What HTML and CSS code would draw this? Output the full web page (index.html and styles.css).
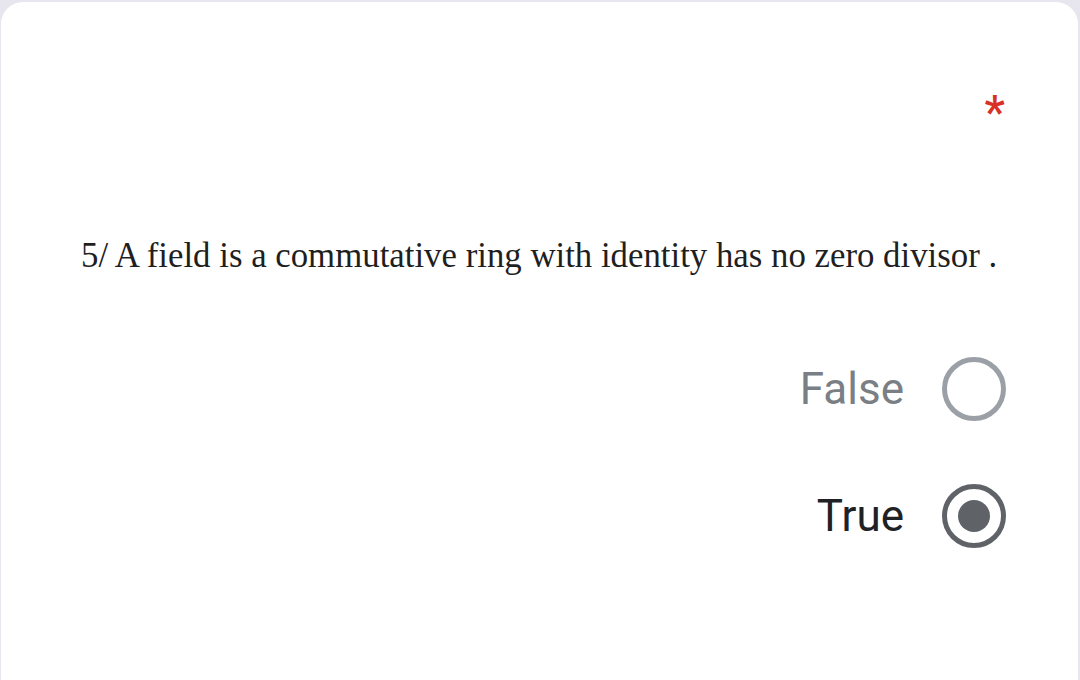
FILE: index.html
```html
<!DOCTYPE html>
<html lang="en">
<head>
  <meta charset="UTF-8" />
  <title>Question 5</title>
  <link rel="stylesheet" href="styles.css">
</head>
<body>
  <div class="card">
    <div class="card-head">
      <span class="required">*</span>
    </div>

    <p class="question">5/ A field is a commutative ring with identity has no zero divisor .</p>

    <div class="options">
      <label class="option">
        <span class="option-label">False</span>
        <span class="radio"></span>
      </label>
      <label class="option checked">
        <span class="option-label">True</span>
        <span class="radio"><span class="radio-dot"></span></span>
      </label>
    </div>
  </div>
</body>
</html>
```

FILE: styles.css
```css
body {
  margin: 0;
  background: #e7e5ee;
  font-family: Roboto, 'Noto Sans', sans-serif;
  height: 680px;
  overflow: hidden;
}

.card {
  background: #ffffff;
  margin: 2px 2px 0 1px;
  border-radius: 22px 22px 0 0;
  height: 720px;
  padding: 0 72px 0 80px;
}

.card-head {
  display: flex;
  justify-content: flex-end;
  padding-top: 90px;
  height: 56px;
}

.required {
  color: #d93025;
  font-size: 46px;
  line-height: 40px;
  font-weight: 500;
  font-family: Roboto, sans-serif;
  margin-right: 1px;
}

.question {
  font-family: 'Liberation Serif', 'Times New Roman', serif;
  font-size: 34.8px;
  color: #1f1f1f;
  margin: 88px 0 0;
  line-height: 40px;
  white-space: nowrap;
}

.options {
  display: flex;
  flex-direction: column;
  align-items: flex-end;
  gap: 63px;
  margin-top: 81px;
}

.option {
  display: flex;
  align-items: center;
  gap: 38px;
  height: 64px;
}

.option-label {
  font-size: 44px;
  color: #7a7f85;
}

.checked .option-label {
  color: #202124;
}

.radio {
  width: 54px;
  height: 54px;
  border: 5px solid #9aa0a6;
  border-radius: 50%;
  display: flex;
  align-items: center;
  justify-content: center;
}

.checked .radio {
  border-color: #5f6368;
}

.radio-dot {
  width: 32px;
  height: 32px;
  border-radius: 50%;
  background: #5f6368;
}
```
